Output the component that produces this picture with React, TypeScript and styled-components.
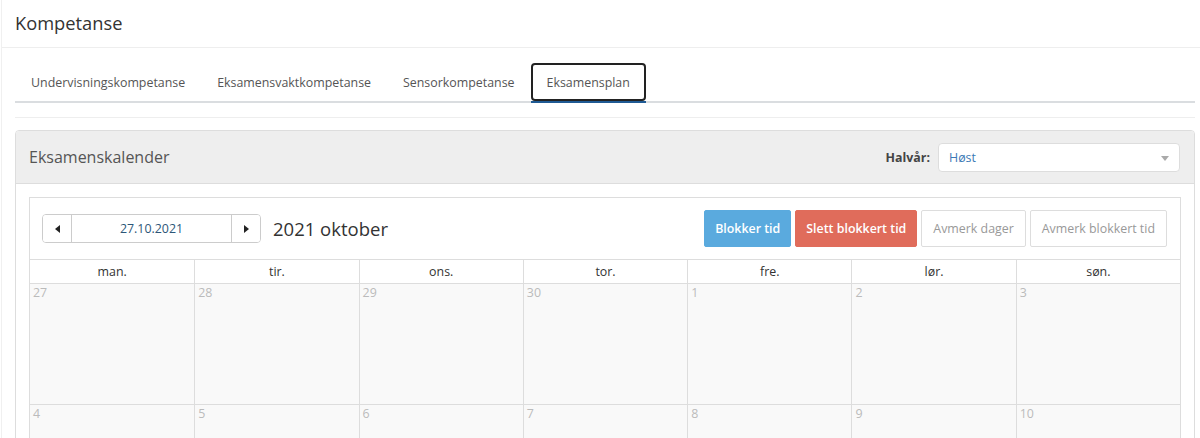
import React from "react";
import styled, { createGlobalStyle } from "styled-components";

const GlobalStyle = createGlobalStyle`
  html, body {
    margin: 0;
    padding: 0;
    background: #fff;
    font-family: "Open Sans", "Liberation Sans", sans-serif;
    color: #333;
  }
  * { box-sizing: border-box; }
`;

const Page = styled.div`
  margin-left: 1px;
  border-left: 1px solid #f0f0f0;
  min-height: 438px;
`;

const TitleBar = styled.div`
  height: 48px;
  display: flex;
  align-items: center;
  padding: 0 0 2px 13px;
  border-bottom: 1px solid #eee;
  font-size: 18.3px;
  color: #333;
`;

const Content = styled.div`
  padding: 0 5px 0 13px;
`;

const TabList = styled.div`
  display: flex;
  margin-top: 15px;
  border-bottom: 2px solid #dadde0;
`;

const Tab = styled.div<{ $active?: boolean }>`
  margin-bottom: -2px;
  border-bottom: 2px solid ${(p) => (p.$active ? "#1f5a94" : "transparent")};
`;

const TabLabel = styled.div<{ $active?: boolean }>`
  height: 38px;
  display: flex;
  align-items: center;
  padding: 0 14px;
  font-size: 12.4px;
  color: #555;
  border: 2px solid ${(p) => (p.$active ? "#222" : "transparent")};
  border-radius: 4px;
`;

const Divider = styled.div`
  margin-top: 14px;
  border-top: 1px solid #eee;
`;

const Panel = styled.div`
  margin-top: 12px;
  border: 1px solid #ddd;
  border-radius: 4px;
  overflow: hidden;
`;

const PanelHeading = styled.div`
  height: 53px;
  display: flex;
  align-items: center;
  justify-content: space-between;
  padding: 0 14px 0 13px;
  background: #eee;
  border-bottom: 1px solid #ddd;
`;

const PanelTitle = styled.div`
  font-size: 16px;
  color: #555;
`;

const Field = styled.div`
  display: flex;
  align-items: center;
  gap: 8px;
`;

const FieldLabel = styled.label`
  font-size: 12.4px;
  font-weight: 700;
  color: #444;
`;

const Select = styled.div`
  position: relative;
  width: 242px;
  height: 29px;
  display: flex;
  align-items: center;
  padding: 0 10px;
  background: #fff;
  border: 1px solid #ddd;
  border-radius: 4px;
  font-size: 12.4px;
  color: #3a78b5;
`;

const SelectCaret = styled.span`
  position: absolute;
  right: 10px;
  top: 12px;
  border-left: 4px solid transparent;
  border-right: 4px solid transparent;
  border-top: 5px solid #aaa;
`;

const PanelBody = styled.div`
  padding: 13px;
  background: #fff;
`;

const Calendar = styled.div`
  border: 1px solid #ddd;
  border-bottom: none;
`;

const Toolbar = styled.div`
  height: 61px;
  display: flex;
  align-items: center;
  justify-content: space-between;
  padding: 0 13px 0 12px;
`;

const DateNav = styled.div`
  display: flex;
  align-items: center;
`;

const DateGroup = styled.div`
  display: flex;
  height: 29px;
  border: 1px solid #ccc;
  border-radius: 4px;
  overflow: hidden;
`;

const NavButton = styled.button`
  width: 28px;
  display: flex;
  align-items: center;
  justify-content: center;
  background: #fff;
  border: none;
  padding: 0;
`;

const Arrow = styled.span<{ $dir: "left" | "right" }>`
  border-top: 4px solid transparent;
  border-bottom: 4px solid transparent;
  ${(p) =>
    p.$dir === "left"
      ? "border-right: 5px solid #222;"
      : "border-left: 5px solid #222;"}
`;

const DateInput = styled.div`
  width: 161px;
  display: flex;
  align-items: center;
  justify-content: center;
  border-left: 1px solid #ccc;
  border-right: 1px solid #ccc;
  font-size: 12.4px;
  color: #2d5678;
`;

const MonthTitle = styled.h2`
  margin: 0 0 0 12px;
  font-size: 18.5px;
  font-weight: 400;
  color: #333;
`;

const Actions = styled.div`
  display: flex;
  gap: 4px;
`;

const ActionButton = styled.button<{ $variant: "primary" | "danger" | "plain" }>`
  height: 37px;
  padding: 0 ${(p) => (p.$variant === "plain" ? 11 : 10)}px;
  font-family: inherit;
  font-size: 12.4px;
  border-radius: 2px;
  font-weight: ${(p) => (p.$variant === "plain" ? 400 : 600)};
  color: ${(p) => (p.$variant === "plain" ? "#999" : "#fff")};
  background: ${(p) =>
    p.$variant === "primary" ? "#5aaade" : p.$variant === "danger" ? "#e06c5b" : "#fff"};
  border: 1px solid
    ${(p) =>
      p.$variant === "primary" ? "#5aaade" : p.$variant === "danger" ? "#e06c5b" : "#ddd"};
`;

const Grid = styled.div`
  display: grid;
  grid-template-columns: repeat(7, 1fr);
  border-top: 1px solid #ddd;
`;

const DayName = styled.div`
  height: 24px;
  display: flex;
  align-items: center;
  justify-content: center;
  font-size: 12.4px;
  color: #333;
  border-bottom: 1px solid #ddd;
  border-left: 1px solid #ddd;
  &:first-child { border-left: none; }
`;

const DayCell = styled.div<{ $first?: boolean }>`
  height: 121px;
  padding: 0 3px;
  background: #f9f9f9;
  font-size: 12.4px;
  color: #bbb;
  border-bottom: 1px solid #ddd;
  border-left: ${(p) => (p.$first ? "none" : "1px solid #ddd")};
`;

const tabs = [
  "Undervisningskompetanse",
  "Eksamensvaktkompetanse",
  "Sensorkompetanse",
  "Eksamensplan",
];

const dayNames = ["man.", "tir.", "ons.", "tor.", "fre.", "lør.", "søn."];
const days = [27, 28, 29, 30, 1, 2, 3, 4, 5, 6, 7, 8, 9, 10];

export default function App() {
  return (
    <>
      <GlobalStyle />
      <Page>
        <TitleBar>Kompetanse</TitleBar>
        <Content>
          <TabList>
            {tabs.map((t) => (
              <Tab key={t} $active={t === "Eksamensplan"}>
                <TabLabel $active={t === "Eksamensplan"}>{t}</TabLabel>
              </Tab>
            ))}
          </TabList>
          <Divider />
          <Panel>
            <PanelHeading>
              <PanelTitle>Eksamenskalender</PanelTitle>
              <Field>
                <FieldLabel>Halvår:</FieldLabel>
                <Select>
                  Høst
                  <SelectCaret />
                </Select>
              </Field>
            </PanelHeading>
            <PanelBody>
              <Calendar>
                <Toolbar>
                  <DateNav>
                    <DateGroup>
                      <NavButton>
                        <Arrow $dir="left" />
                      </NavButton>
                      <DateInput>27.10.2021</DateInput>
                      <NavButton>
                        <Arrow $dir="right" />
                      </NavButton>
                    </DateGroup>
                    <MonthTitle>2021 oktober</MonthTitle>
                  </DateNav>
                  <Actions>
                    <ActionButton $variant="primary">Blokker tid</ActionButton>
                    <ActionButton $variant="danger">Slett blokkert tid</ActionButton>
                    <ActionButton $variant="plain">Avmerk dager</ActionButton>
                    <ActionButton $variant="plain">Avmerk blokkert tid</ActionButton>
                  </Actions>
                </Toolbar>
                <Grid>
                  {dayNames.map((d) => (
                    <DayName key={d}>{d}</DayName>
                  ))}
                  {days.map((d, i) => (
                    <DayCell key={i} $first={i % 7 === 0}>
                      {d}
                    </DayCell>
                  ))}
                </Grid>
              </Calendar>
            </PanelBody>
          </Panel>
        </Content>
      </Page>
    </>
  );
}
